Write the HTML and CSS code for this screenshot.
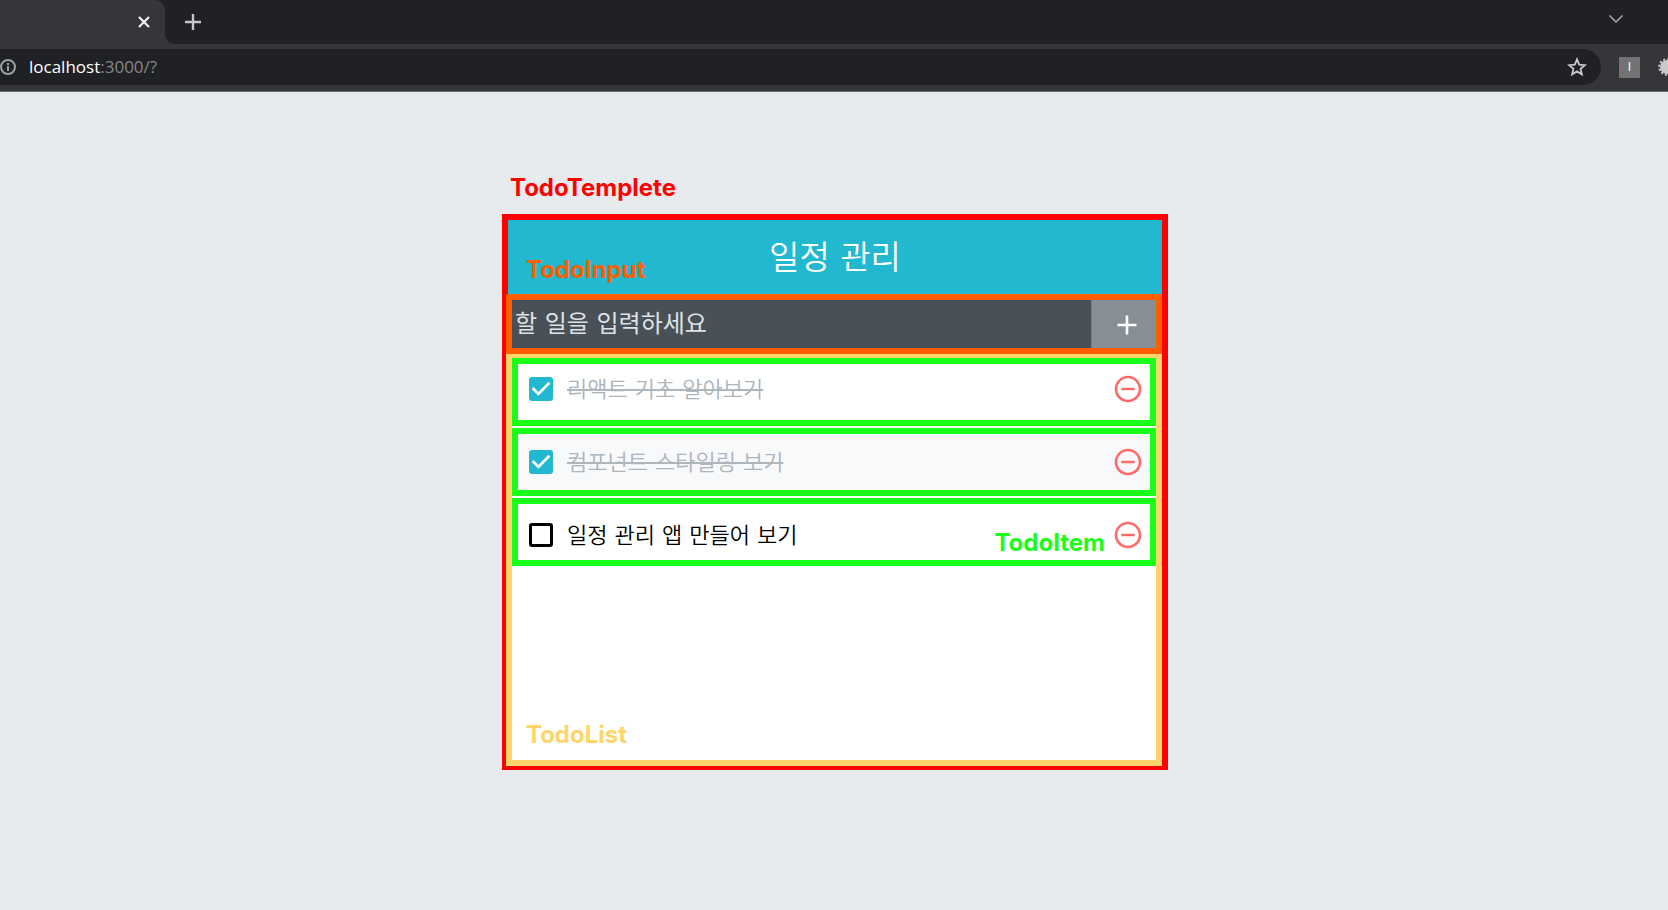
FILE: index.html
```html
<!DOCTYPE html>
<html lang="ko">
<head>
<meta charset="utf-8">
<title>일정 관리</title>
<link rel="stylesheet" href="styles.css">
</head>
<body>
<header class="browser">
  <div class="tabstrip">
    <div class="tab">
      <button class="icon-btn close" aria-label="탭 닫기"><svg width="12" height="12" viewBox="0 0 12 12"><path d="M1 1l10 10M11 1L1 11" stroke="#f1f3f4" stroke-width="2.2"/></svg></button>
    </div>
    <button class="icon-btn new-tab" aria-label="새 탭"><svg width="16" height="16" viewBox="0 0 16 16"><path d="M8 0v16M0 8h16" stroke="#c4c6c9" stroke-width="2.4"/></svg></button>
    <button class="icon-btn tab-search" aria-label="탭 검색"><svg width="16" height="10" viewBox="0 0 16 10"><path d="M1.5 1.5L8 8l6.500-6.500" fill="none" stroke="#a9abae" stroke-width="1.500"/></svg></button>
  </div>
  <div class="toolbar">
    <div class="omnibox">
      <svg class="info" width="16" height="16" viewBox="0 0 16 16"><circle cx="8" cy="8" r="7" fill="none" stroke="#9aa0a6" stroke-width="2"/><path d="M8 7v5M8 4v2" stroke="#9aa0a6" stroke-width="2"/></svg>
      <a class="url" href="#"><span class="host">localhost</span>:3000/?</a>
      <button class="icon-btn" aria-label="북마크"><svg width="20" height="20" viewBox="0 0 20 20"><path d="M10 2.400l2.200 5.200 5.600.5-4.250 3.700 1.300 5.500L10 14.400l-4.850 2.900 1.300-5.500L2.200 8.100l5.600-.5z" fill="none" stroke="#c8c9cb" stroke-width="1.800"/></svg></button>
    </div>
    <button class="extension" aria-label="확장 프로그램">I</button>
    <button class="icon-btn gear" aria-label="설정"><svg width="18" height="18" viewBox="0 0 18 18"><circle cx="9" cy="9" r="7" fill="#c9c9c9"/><circle cx="9" cy="9" r="7.800" fill="none" stroke="#c9c9c9" stroke-width="2" stroke-dasharray="2.050 2.034"/></svg></button>
  </div>
</header>
<main class="page">
  <section class="template">
    <span class="note note-template">TodoTemplete</span>
    <h1 class="title">일정 관리</h1>
    <span class="note note-input">TodoInput</span>
    <form class="insert">
      <input class="field" type="text" placeholder="할 일을 입력하세요" aria-label="할 일">
      <button class="add" type="button" aria-label="추가"><svg width="20" height="20" viewBox="0 0 20 20"><path d="M10 .5v19M.5 10h19" stroke="#fff" stroke-width="2.600"/></svg></button>
    </form>
    <div class="list-wrap">
      <ul class="list">
        <li class="item">
          <label class="todo"><input class="check" type="checkbox" checked><span class="text">리액트 기초 알아보기</span></label>
          <button class="icon-btn" aria-label="삭제"><svg class="minus" viewBox="0 0 24 24"><path d="M7 11v2h10v-2H7zm5-9C6.480 2 2 6.480 2 12s4.480 10 10 10 10-4.480 10-10S17.520 2 12 2zm0 18c-4.410 0-8-3.590-8-8s3.590-8 8-8 8 3.590 8 8-3.590 8-8 8z"/></svg></button>
        </li>
        <li class="item">
          <label class="todo"><input class="check" type="checkbox" checked><span class="text">컴포넌트 스타일링 보기</span></label>
          <button class="icon-btn" aria-label="삭제"><svg class="minus" viewBox="0 0 24 24"><path d="M7 11v2h10v-2H7zm5-9C6.480 2 2 6.480 2 12s4.480 10 10 10 10-4.480 10-10S17.520 2 12 2zm0 18c-4.410 0-8-3.590-8-8s3.590-8 8-8 8 3.590 8 8-3.590 8-8 8z"/></svg></button>
        </li>
        <li class="item">
          <label class="todo"><input class="check" type="checkbox"><span class="text">일정 관리 앱 만들어 보기</span></label>
          <span class="note note-item">TodoItem</span>
          <button class="icon-btn" aria-label="삭제"><svg class="minus" viewBox="0 0 24 24"><path d="M7 11v2h10v-2H7zm5-9C6.480 2 2 6.480 2 12s4.480 10 10 10 10-4.480 10-10S17.520 2 12 2zm0 18c-4.410 0-8-3.590-8-8s3.590-8 8-8 8 3.590 8 8-3.590 8-8 8z"/></svg></button>
        </li>
      </ul>
      <span class="note note-list">TodoList</span>
    </div>
  </section>
</main>
</body>
</html>
```

FILE: styles.css
```css
* { box-sizing: border-box; }

body {
  margin: 0;
  overflow-x: hidden;
  background: #e8ebee;
  font-family: "DejaVu Sans", "Noto Sans CJK KR", sans-serif;
}

button { border: 0; padding: 0; font: inherit; }
.icon-btn { display: flex; background: none; }

/* Browser frame */
.browser { background: #35363a; border-bottom: 1px solid #6b6c6f; overflow: hidden; }

.tabstrip {
  display: flex;
  align-items: center;
  height: 44px;
  background: #202124;
}
.tab {
  position: relative;
  display: flex;
  align-items: center;
  justify-content: flex-end;
  width: 165px;
  height: 44px;
  padding-right: 15px;
  background: #35363a;
  border-radius: 0 10px 0 0;
}
.tab::after {
  content: "";
  position: absolute;
  left: 100%;
  bottom: 0;
  width: 10px;
  height: 10px;
  background: radial-gradient(circle at 100% 0, #202124 10px, #35363a 10px);
}
.new-tab { margin-left: 20px; }
.tab-search { margin: 0 44px 6px auto; }

.toolbar {
  display: flex;
  align-items: center;
  gap: 18px;
  padding: 5px 0 6px;
}
.omnibox {
  flex: 1;
  display: flex;
  align-items: center;
  height: 36px;
  padding-right: 14px;
  background: #202124;
  border-radius: 0 18px 18px 0;
}
.url {
  flex: 1;
  margin-left: 13px;
  color: #85878a;
  font: 17px/24px "Open Sans", sans-serif;
  text-decoration: none;
}
.host { color: #fff; }
.extension {
  width: 21px;
  height: 21px;
  background: #737373;
  color: #fff;
  font: 12px/21px "Liberation Sans", sans-serif;
}
.gear { margin-right: -8px; }

/* Todo app */
.page { padding: 122px 0 40px 2px; }

.template {
  position: relative;
  width: 666px;
  max-width: 100%;
  margin: 0 auto;
  border: solid #f00;
  border-width: 6px 6px 4px 4px;
  background: #fff;
}
.title {
  margin: 0;
  padding-top: 2px;
  border-left: 2px solid #f00;
  background: #22b8cf;
  color: #fff;
  font-size: 33px;
  font-weight: 350;
  line-height: 72px;
  text-align: center;
}
.insert {
  display: flex;
  height: 60px;
  border: 6px solid #ff5e00;
}
.field {
  flex: 1;
  min-width: 0;
  padding: 0 3px;
  border: 0;
  outline: 0;
  background: #495057;
  color: #fff;
  font: inherit;
  font-size: 24px;
}
.field::placeholder { color: #dee2e6; opacity: 1; }
.add {
  display: flex;
  align-items: center;
  justify-content: center;
  width: 65px;
  padding-left: 6px;
  padding-top: 2px;
  border-left: 1px solid #747c84;
  background: #868e96;
}

.list-wrap {
  position: relative;
  min-height: 412px;
  padding-top: 4px;
  border: solid #ffd56b;
  border-width: 0 6px 6px;
  background: linear-gradient(#ffd56b 4px, #fff 4px);
}
.list {
  display: grid;
  gap: 2px;
  margin: 0;
  padding: 0;
  list-style: none;
}
.item {
  position: relative;
  display: flex;
  align-items: center;
  justify-content: space-between;
  height: 68px;
  padding: 0 6px 0 7px;
  border: 6px solid #1aff1a;
  background: #fff;
}
.item:first-child { padding-bottom: 6px; }
.item:nth-child(even) { background: #f8f9fa; }
.item:last-child { padding-top: 6px; }

.todo { display: flex; align-items: center; gap: 14px; padding-left: 4px; }
.check {
  appearance: none;
  width: 24px;
  height: 24px;
  margin: 0;
  border: 3px solid #000;
  border-radius: 3px;
}
.check:checked { border: 0; background: #22b8cf; }
.check:checked::after {
  content: "";
  display: block;
  width: 24px;
  height: 24px;
  background: #fff;
  clip-path: polygon(39% 78%, 11% 50%, 19% 42%, 39% 62%, 81% 20%, 89% 28%);
}
.text { padding-top: 2px; color: #000; font-size: 22px; font-weight: 350; line-height: 32px; }
.check:checked + .text { color: #adb5bd; text-decoration: line-through 2px; }
.minus { width: 32px; height: 32px; fill: #ff6b6b; }

/* Component names */
.note {
  position: absolute;
  font: 700 24px/30px Inter, sans-serif;
}
.note-template { left: 4px; top: -47px; color: #f00; }
.note-input { left: 20px; top: 35px; color: #ff5e00; }
.note-item { right: 45px; bottom: 2px; color: #1aff1a; }
.note-list { left: 14px; bottom: 10px; color: #ffd56b; }
```
